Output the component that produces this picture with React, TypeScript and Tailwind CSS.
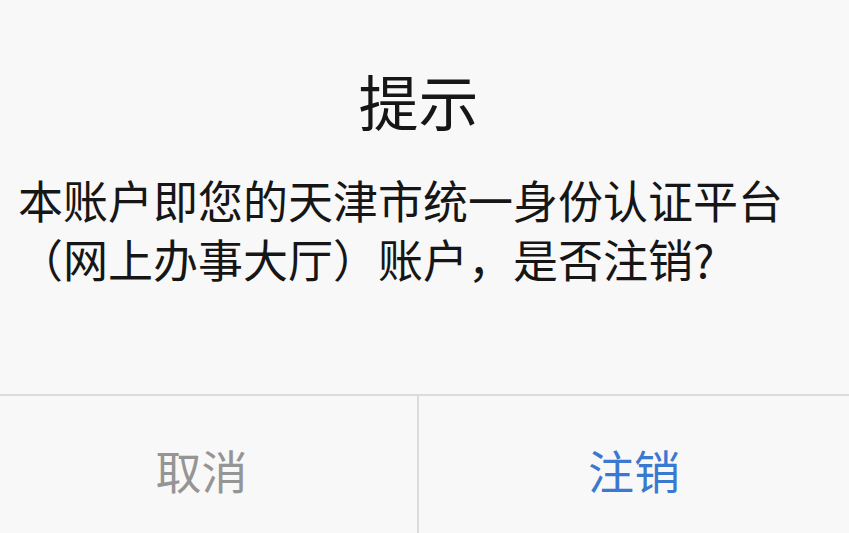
import React from 'react'

export default function App() {
  const font = { fontFamily: '"Noto Sans CJK SC", "Noto Sans", sans-serif' }
  return (
    <div
      className="h-screen w-full overflow-hidden bg-[#f8f8f8] flex flex-col"
      style={font}
    >
      <div className="h-[396px] flex flex-col border-b-2 border-[#dcdcdc] shrink-0">
        <h1 className="pt-[70px] pr-[12px] text-center text-[60px] leading-[60px] text-[#161616]">
          提示
        </h1>
        <p className="mt-[40px] px-[18px] text-[45px] leading-[59px] text-[#161616]">
          本账户即您的天津市统一身份认证平台（网上办事大厅）账户，是否注销?
        </p>
      </div>
      <div className="flex h-[146px] shrink-0">
        <button className="w-[419px] border-r-2 border-[#dcdcdc] pr-[14px] text-[46px] text-[#959595]">
          取消
        </button>
        <button className="flex-1 text-[46px] text-[#3b78d0]">注销</button>
      </div>
    </div>
  )
}
